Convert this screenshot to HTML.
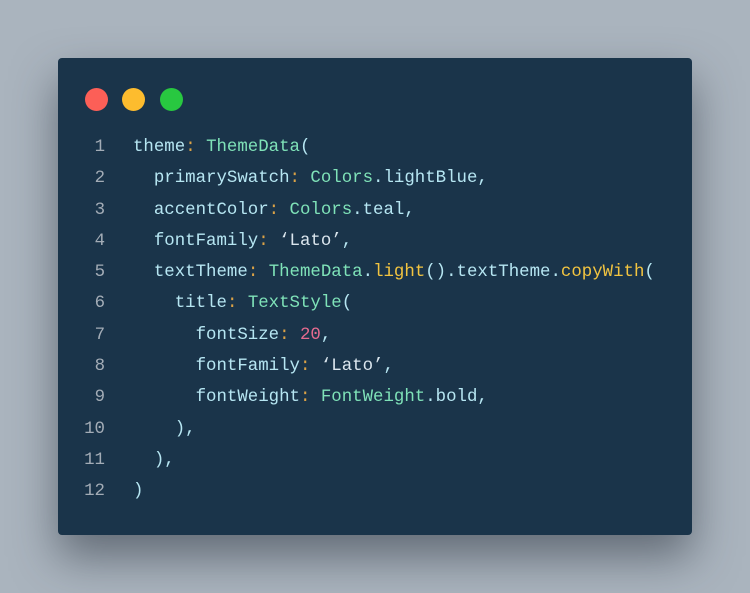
<!DOCTYPE html>
<html><head><style>
html,body{margin:0;padding:0;}
body{width:750px;height:593px;background:#aab4be;position:relative;overflow:hidden;font-family:"Liberation Mono",monospace;}
.card{position:absolute;left:58px;top:58px;width:634px;height:477px;background:#1a344a;border-radius:4px;box-shadow:0 22px 45px rgba(40,48,58,0.55);}
.dot{position:absolute;top:30px;width:23px;height:23px;border-radius:50%;}
.code{position:absolute;left:0;top:74px;font-size:17.4px;line-height:31.3px;white-space:pre;color:#b6e6f2;}
.ln{display:inline-block;width:47px;text-align:right;color:#a3acb6;margin-right:28px;}
.c{color:#7fe2b8}.o{color:#dba246}.y{color:#f2c440}.p{color:#e56b8f}.w{color:#dbe6ee}
</style></head><body>
<div class="card">
<div class="dot" style="left:27px;background:#fc5f57"></div>
<div class="dot" style="left:64px;background:#fdbc2e"></div>
<div class="dot" style="left:102px;background:#28c840"></div>
<div class="code"><span class="ln">1</span>theme<span class="o">:</span> <span class="c">ThemeData</span>(
<span class="ln">2</span>  primarySwatch<span class="o">:</span> <span class="c">Colors</span>.lightBlue,
<span class="ln">3</span>  accentColor<span class="o">:</span> <span class="c">Colors</span>.teal,
<span class="ln">4</span>  fontFamily<span class="o">:</span> <span class="w">‘Lato’</span>,
<span class="ln">5</span>  textTheme<span class="o">:</span> <span class="c">ThemeData</span>.<span class="y">light</span>().textTheme.<span class="y">copyWith</span>(
<span class="ln">6</span>    title<span class="o">:</span> <span class="c">TextStyle</span>(
<span class="ln">7</span>      fontSize<span class="o">:</span> <span class="p">20</span>,
<span class="ln">8</span>      fontFamily<span class="o">:</span> <span class="w">‘Lato’</span>,
<span class="ln">9</span>      fontWeight<span class="o">:</span> <span class="c">FontWeight</span>.bold,
<span class="ln">10</span>    ),
<span class="ln">11</span>  ),
<span class="ln">12</span>)</div>
</div>
</body></html>
